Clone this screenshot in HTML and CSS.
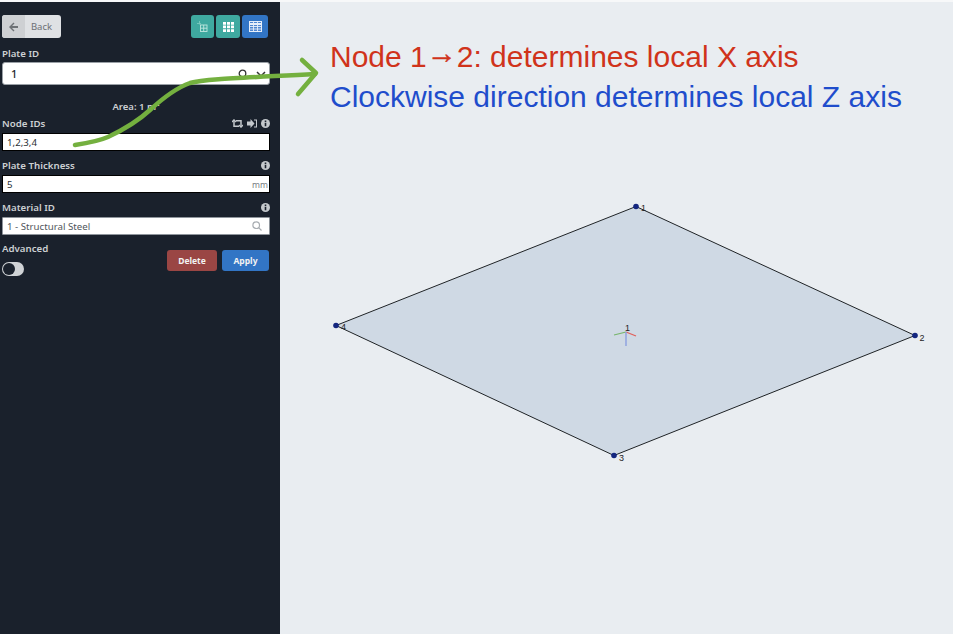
FILE: index.html
```html
<!DOCTYPE html>
<html lang="en">
<head>
<meta charset="utf-8">
<title>Plate editor</title>
<link rel="stylesheet" href="styles.css">
</head>
<body>
<div class="topline"></div>
<div class="page">
  <aside class="sidebar">
    <div class="toolbar">
      <button class="back"><span class="back-icon"><svg width="11" height="10" viewBox="0 0 11 10"><path d="M5.500.5 1 5l4.500 4.500 1-1L4 6h6V4H4l2.500-2.500z" fill="#6d7175"/></svg></span><span class="back-text">Back</span></button>
      <div class="tools">
        <button class="tool teal w23"><svg width="11" height="11" viewBox="0 0 11 11" fill="none" stroke="#bfe6df" stroke-width=".9"><rect x="3.500" y="4" width="6.500" height="6.500"/><path d="M3.500 7.200H10M6.700 4v6.500" /><path d="M2.500 0v3.500M0 2.500h4" stroke="#7cc9bf"/></svg></button>
        <button class="tool teal w24"><svg width="11" height="10" viewBox="0 0 11 10" fill="#fff"><path d="M0 0h3v2.700H0zM4 0h3v2.700H4zM8 0h3v2.700H8zM0 3.600h3v2.700H0zM4 3.600h3v2.700H4zM8 3.600h3v2.700H8zM0 7.300h3V10H0zM4 7.300h3V10H4zM8 7.300h3V10H8z"/></svg></button>
        <button class="tool blue w26"><svg width="13" height="11" viewBox="0 0 13 11" fill="none" stroke="#e6eefa"><rect x=".5" y=".5" width="12" height="10" fill="#4f86cf"/><path d="M.5 3h12" stroke-width="2"/><path d="M.5 5.500h12M.5 8h12M4.500 1v9M8.500 1v9" stroke-width=".9"/></svg></button>
      </div>
    </div>

    <label class="label first">Plate ID</label>
    <div class="select">
      <span>1</span>
      <span class="select-icons"><svg width="10" height="10" viewBox="0 0 10 10" fill="none" stroke="#333" stroke-width="1.300"><circle cx="4.500" cy="4.500" r="3.300"/><path d="m7 7 2.500 2.500"/></svg><svg width="10" height="6" viewBox="0 0 10 6" fill="none" stroke="#333" stroke-width="1.500"><path d="m1 1 4 4 4-4"/></svg></span>
    </div>

    <div class="area">Area: 1 m²</div>

    <div class="label-row node-row">
      <label class="label">Node IDs</label>
      <span class="hint-icons">
        <svg width="11" height="9" viewBox="0 0 11 9" fill="none" stroke="#c4c8cc" stroke-width="1.500"><path d="M2 1.500v5.700h5M9 7.500V1.800H4"/><path d="M0 3l2-2.200L4 3M7 6l2 2.200L11 6" stroke-width="1.200"/></svg>
        <svg width="10" height="9" viewBox="0 0 10 9" fill="#c4c8cc"><path d="M3.500 0 7.500 4.500 3.500 9V6.500H0v-4h3.500z"/><path d="M7 .5h3v8H7V7.500h2v-6H7z"/></svg>
        <svg class="info" width="9" height="9" viewBox="0 0 9 9"><circle cx="4.500" cy="4.500" r="4.500" fill="#c4c8cc"/><path d="M3.700 3.800h1.600v3.500H3.700zM3.700 1.500h1.600v1.400H3.700z" fill="#1a212c"/></svg>
      </span>
    </div>
    <div class="field black">1,2,3,4</div>

    <div class="label-row thick-row">
      <label class="label">Plate Thickness</label>
      <svg class="info" width="9" height="9" viewBox="0 0 9 9"><circle cx="4.500" cy="4.500" r="4.500" fill="#c4c8cc"/><path d="M3.700 3.800h1.600v3.500H3.700zM3.700 1.500h1.600v1.400H3.700z" fill="#1a212c"/></svg>
    </div>
    <div class="field black"><span>5</span><span class="unit">mm</span></div>

    <div class="label-row mat-row">
      <label class="label">Material ID</label>
      <svg class="info" width="9" height="9" viewBox="0 0 9 9"><circle cx="4.500" cy="4.500" r="4.500" fill="#c4c8cc"/><path d="M3.700 3.800h1.600v3.500H3.700zM3.700 1.500h1.600v1.400H3.700z" fill="#1a212c"/></svg>
    </div>
    <div class="field grey"><span>1 - Structural Steel</span><svg width="10" height="10" viewBox="0 0 10 10" fill="none" stroke="#a8adb2" stroke-width="1.200"><circle cx="4.200" cy="4.200" r="3.300"/><path d="m6.700 6.700 2.800 2.800"/></svg></div>

    <div class="bottom">
      <div class="advanced">
        <label class="label">Advanced</label>
        <span class="toggle"><span class="knob"></span></span>
      </div>
      <div class="actions">
        <button class="action delete">Delete</button>
        <button class="action apply">Apply</button>
      </div>
    </div>
  </aside>

  <main class="main">
    <div class="notes">
      <p class="note red">Node 1<span class="note-arrow">→</span>2: determines local X axis</p>
      <p class="note bluetext">Clockwise direction determines local Z axis</p>
    </div>
    <svg class="diagram" viewBox="280 122 673 510" width="673" height="510">
      <polygon points="636,206.500 915,335.500 614,455.500 336,325.500" fill="#cfd9e4" stroke="#1f2326" stroke-width="1"/>
      <g fill="#14267f">
        <circle cx="636" cy="206.500" r="2.800"/>
        <circle cx="915" cy="335.500" r="2.800"/>
        <circle cx="614" cy="455.500" r="2.800"/>
        <circle cx="336" cy="325.500" r="2.800"/>
      </g>
      <g class="node-label">
        <text x="641" y="211">1</text>
        <text x="919.500" y="341">2</text>
        <text x="619" y="461">3</text>
        <text x="341" y="330">4</text>
        <text x="625" y="331">1</text>
      </g>
      <path d="M626 332 636 336" stroke="#e0605a" stroke-width="1.200"/>
      <path d="M626 332 614 335" stroke="#76b56a" stroke-width="1.200"/>
      <path d="M626 332V346" stroke="#8a9fe0" stroke-width="1.400"/>
    </svg>
  </main>
</div>
<svg class="annotation" width="953" height="634" viewBox="0 0 953 634" fill="none" stroke="#74b03f" stroke-linecap="round" stroke-linejoin="round">
  <path d="M75 145C88 143 99 141 108 137C125 129 138 121 150 110C163 98 176 88 190 83C204 79 240 78 315 74" stroke-width="4.500"/>
  <path d="M302 60 316 73 298 94" stroke-width="4.500"/>
</svg>
</body>
</html>
```
FILE: styles.css
```css
* { box-sizing: border-box; }
html, body { margin: 0; padding: 0; }
body {
  width: 953px;
  height: 634px;
  overflow: hidden;
  position: relative;
  background: #e9edf1;
  font-family: "Noto Sans", "Open Sans", sans-serif;
}
.topline { height: 2px; background: #f7f8f9; }
.page { display: flex; height: 632px; }

.sidebar {
  width: 280px;
  flex: none;
  background: #1a212c;
  padding: 13px 10px 0 2px;
  display: flex;
  flex-direction: column;
  color: #cdd0d3;
}
button { font-family: inherit; border: 0; padding: 0; cursor: pointer; }

.toolbar { display: flex; justify-content: space-between; height: 23px; padding-right: 2px; }
.back {
  width: 59px;
  height: 23px;
  display: flex;
  background: #dfe1e4;
  border-radius: 3px;
  overflow: hidden;
}
.back-icon { width: 23px; display: flex; align-items: center; justify-content: center; background: #ced0d3; }
.back-text { flex: 1; font-size: 9.500px; line-height: 23px; color: #6c7075; text-align: center; padding-right: 3px; }
.tools { display: flex; gap: 2px; }
.tool { height: 23px; border-radius: 3px; display: flex; align-items: center; justify-content: center; }
.w23 { width: 23px; }
.w24 { width: 24px; }
.w26 { width: 26px; }
.teal { background: #3fa9a0; }
.blue { background: #3275c5; }

.label { display: block; height: 14px; font-size: 9.700px; line-height: 16px; font-weight: 600; color: #cdd0d3; }
.first { margin-top: 8px; }
.label-row { display: flex; justify-content: space-between; align-items: center; height: 14px; }
.info { display: block; }
.hint-icons { display: flex; align-items: center; gap: 4px; }

.select {
  margin-top: 2px;
  height: 23px;
  width: 268px;
  background: #fff;
  border: 1px solid #9aa0a6;
  border-radius: 3px;
  padding: 0 3px 0 8px;
  display: flex;
  justify-content: space-between;
  align-items: center;
  font-size: 11px;
  font-weight: 500;
  color: #20262c;
}
.select-icons { display: flex; align-items: center; gap: 8px; }
.area { margin-top: 15px; height: 14px; font-size: 9.500px; line-height: 14px; text-align: center; font-weight: 600; color: #cdd0d3; }
.node-row { margin-top: 2px; }
.thick-row { margin-top: 7px; }
.mat-row { margin-top: 7px; }

.field {
  margin-top: 3px;
  height: 18px;
  width: 268px;
  background: #fff;
  padding: 0 1px 0 4px;
  display: flex;
  align-items: center;
  justify-content: space-between;
  font-size: 9.700px;
  color: #2a2f35;
}
.black { border: 1px solid #000; }
.grey { border: 1px solid #8f959c; padding-right: 7px; color: #51565c; border-radius: 1px; }
.unit { font-size: 8.500px; color: #777c82; align-self: flex-end; line-height: 14px; }

.bottom { display: flex; justify-content: space-between; margin-top: 6px; }
.toggle {
  display: block;
  width: 22px;
  height: 14px;
  margin-top: 7px;
  background: #d0d3d6;
  border-radius: 7px;
  position: relative;
}
.knob { position: absolute; left: 1px; top: 1px; width: 12px; height: 12px; border-radius: 50%; background: #1a212c; }
.actions { display: flex; gap: 5px; margin-top: 9px; margin-right: 1px; }
.action { height: 21px; border-radius: 3px; color: #f2f2f2; font-size: 8.500px; font-weight: 700; }
.delete { width: 50px; background: #9a4644; }
.apply { width: 47px; background: #3275c5; }

.main { flex: 1; display: flex; flex-direction: column; }
.notes { height: 120px; padding: 35px 0 0 50px; font-family: "Liberation Sans", Arial, sans-serif; }
.note { margin: 0; font-size: 30px; line-height: 40px; white-space: nowrap; }
.red { color: #d0331b; }
.bluetext { color: #1f4dcc; }
.note-arrow { line-height: 0; vertical-align: 4px; -webkit-text-stroke: 0.5px #d0331b; }
.diagram { display: block; }
.node-label { font-family: "Liberation Sans", Arial, sans-serif; font-size: 9px; fill: #1f2326; }

.annotation { position: absolute; left: 0; top: 0; pointer-events: none; }
```
